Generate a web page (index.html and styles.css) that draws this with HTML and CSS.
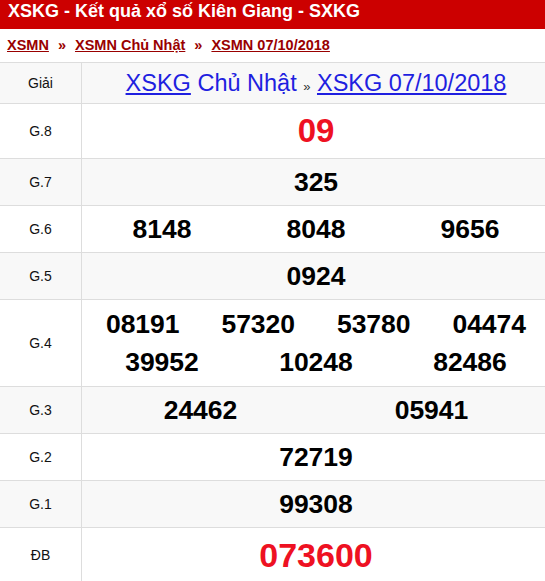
FILE: index.html
```html
<!DOCTYPE html>
<html lang="vi">
<head>
<meta charset="utf-8">
<title>XSKG - Kết quả xổ số Kiên Giang</title>
<link rel="stylesheet" href="styles.css">
</head>
<body>
<header class="topbar"><h1 class="title">XSKG - Kết quả xổ số Kiên Giang - SXKG</h1></header>
<nav class="crumbs">
  <a href="#">XSMN</a><span class="sep">»</span><a href="#">XSMN Chủ Nhật</a><span class="sep">»</span><a href="#">XSMN 07/10/2018</a>
</nav>
<div class="result">
  <div class="row">
    <div class="label">Giải</div>
    <div class="head-cell"><a href="#">XSKG</a> <span class="day">Chủ Nhật</span> <span class="raquo">»</span> <a href="#">XSKG 07/10/2018</a></div>
  </div>
  <div class="row">
    <div class="label">G.8</div>
    <div class="nums big"><span>09</span></div>
  </div>
  <div class="row">
    <div class="label">G.7</div>
    <div class="nums"><span>325</span></div>
  </div>
  <div class="row">
    <div class="label">G.6</div>
    <div class="nums"><span>8148</span><span>8048</span><span>9656</span></div>
  </div>
  <div class="row">
    <div class="label">G.5</div>
    <div class="nums"><span>0924</span></div>
  </div>
  <div class="row">
    <div class="label">G.4</div>
    <div class="multi">
      <div class="line"><span>08191</span><span>57320</span><span>53780</span><span>04474</span></div>
      <div class="line"><span>39952</span><span>10248</span><span>82486</span></div>
    </div>
  </div>
  <div class="row">
    <div class="label">G.3</div>
    <div class="nums"><span>24462</span><span>05941</span></div>
  </div>
  <div class="row">
    <div class="label">G.2</div>
    <div class="nums"><span>72719</span></div>
  </div>
  <div class="row">
    <div class="label">G.1</div>
    <div class="nums"><span>99308</span></div>
  </div>
  <div class="row">
    <div class="label">ĐB</div>
    <div class="nums big special"><span>073600</span></div>
  </div>
</div>
</body>
</html>
```
FILE: styles.css
```css
html, body {
  margin: 0;
  padding: 0;
  overflow: hidden;
  background: #fff;
  font-family: "Liberation Sans", Arial, sans-serif;
}

.topbar {
  background: #cc0000;
  height: 29px;
  padding: 0 8px;
}

.title {
  margin: 0;
  color: #fff;
  font-size: 18px;
  font-weight: bold;
  line-height: 23px;
  white-space: nowrap;
}

.crumbs {
  height: 33px;
  line-height: 33px;
  padding-left: 7px;
  font-size: 14.5px;
  font-weight: bold;
  color: #990000;
  white-space: nowrap;
}

.crumbs a {
  color: #990000;
  text-decoration: underline;
}

.crumbs .sep {
  margin: 0 9px;
}

.result {
  border-top: 1px solid #ddd;
  width: 550px;
}

.row {
  display: grid;
  grid-template-columns: 82px 468px;
  border-bottom: 1px solid #ddd;
}

.row:nth-child(odd) {
  background: #f8f8f8;
}

.label {
  box-sizing: border-box;
  border-right: 1px solid #ddd;
  display: flex;
  align-items: center;
  justify-content: center;
  font-size: 14px;
  color: #111;
}

.head-cell {
  height: 40px;
  text-align: center;
  line-height: 40px;
  font-size: 23.5px;
  color: #1f1fe0;
  white-space: nowrap;
}

.head-cell > * {
  line-height: 1;
}

.head-cell a {
  color: #1f1fe0;
  text-decoration: underline;
}

.head-cell .raquo {
  font-size: 13px;
  color: #333;
}

.nums {
  display: flex;
  padding: 4px 3px;
}

.nums span,
.line span {
  flex: 1;
  text-align: center;
  line-height: 38px;
  font-size: 26.5px;
  font-weight: bold;
  color: #000;
}

.nums.big span {
  line-height: 46px;
  font-size: 33px;
  color: #ee1122;
}

.nums.special span {
  font-size: 34px;
}

.multi {
  padding: 5px 3px;
}

.line {
  display: flex;
}
```
